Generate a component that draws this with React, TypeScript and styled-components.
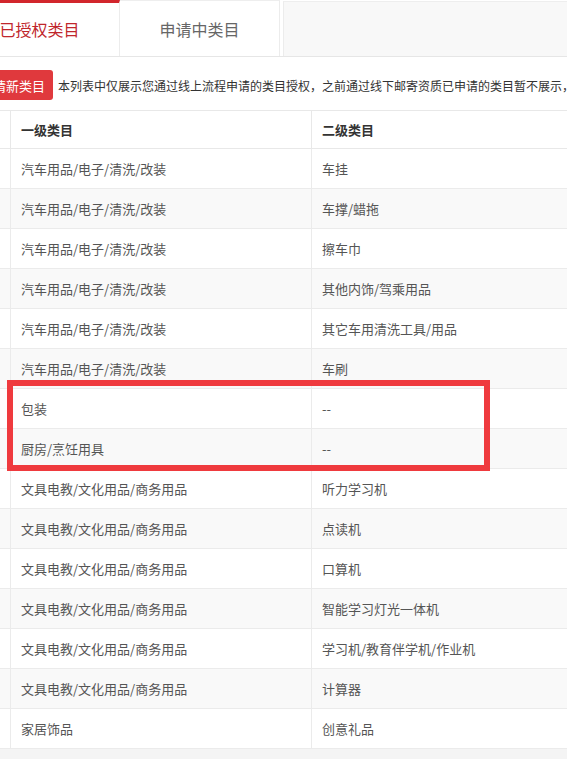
import React from "react";
import styled, { createGlobalStyle } from "styled-components";

const GlobalStyle = createGlobalStyle`
    html, body {
        margin: 0;
        padding: 0;
        background: #f4f4f4;
        overflow: hidden;
    }
    body {
        font-family: "Noto Sans CJK SC", "Liberation Sans", sans-serif;
        color: #333;
    }
`;

type Row = [string, string];

const rows: Row[] = [
    ["汽车用品/电子/清洗/改装", "车挂"],
    ["汽车用品/电子/清洗/改装", "车撑/蜡拖"],
    ["汽车用品/电子/清洗/改装", "擦车巾"],
    ["汽车用品/电子/清洗/改装", "其他内饰/驾乘用品"],
    ["汽车用品/电子/清洗/改装", "其它车用清洗工具/用品"],
    ["汽车用品/电子/清洗/改装", "车刷"],
    ["包装", "--"],
    ["厨房/烹饪用具", "--"],
    ["文具电教/文化用品/商务用品", "听力学习机"],
    ["文具电教/文化用品/商务用品", "点读机"],
    ["文具电教/文化用品/商务用品", "口算机"],
    ["文具电教/文化用品/商务用品", "智能学习灯光一体机"],
    ["文具电教/文化用品/商务用品", "学习机/教育伴学机/作业机"],
    ["文具电教/文化用品/商务用品", "计算器"],
    ["家居饰品", "创意礼品"],
];

const App = () => {
    return (
        <>
            <GlobalStyle />
            <Page>
                <TabBar>
                    <Tab active>已授权类目</Tab>
                    <Tab>申请中类目</Tab>
                    <TabFiller />
                </TabBar>
                <Toolbar>
                    <ApplyBtn>申请新类目</ApplyBtn>
                    <Notice>
                        本列表中仅展示您通过线上流程申请的类目授权，之前通过线下邮寄资质已申请的类目暂不展示，
                    </Notice>
                </Toolbar>
                <TableWrap>
                    <Table>
                        <thead>
                            <tr>
                                <HeadCell />
                                <HeadCell>一级类目</HeadCell>
                                <HeadCell>二级类目</HeadCell>
                            </tr>
                        </thead>
                        <tbody>
                            {rows.map(([first, second], i) => (
                                <BodyRow key={i} striped={i % 2 === 1}>
                                    <Cell />
                                    <Cell>{first}</Cell>
                                    <Cell>{second}</Cell>
                                </BodyRow>
                            ))}
                        </tbody>
                    </Table>
                    <Highlight />
                </TableWrap>
            </Page>
        </>
    );
};

const Page = styled.div`
    margin-left: -40px;
    width: 960px;
    background: #fff;
`;

const TabBar = styled.div`
    display: flex;
    height: 56px;
    border-bottom: 1px solid #e6e6e6;
`;

const Tab = styled.div<{ active?: boolean }>`
    box-sizing: border-box;
    width: 160px;
    height: 56px;
    display: flex;
    align-items: center;
    justify-content: center;
    font-size: 16px;
    background: #fff;
    border-right: 1px solid #ececec;
    border-top: ${(p) => (p.active ? "3px solid #d2262c" : "1px solid #eee")};
    color: ${(p) => (p.active ? "#c0262c" : "#666")};
    padding-bottom: ${(p) => (p.active ? "1px" : "0")};
`;

const TabFiller = styled.div`
    flex: 1;
    margin-left: 3px;
    margin-top: 1px;
    background: #f8f8f8;
    border-top: 1px solid #eee;
    border-left: 1px solid #ececec;
`;

const Toolbar = styled.div`
    display: flex;
    align-items: center;
    gap: 5px;
    margin-top: 13px;
    padding-left: 12px;
    height: 30px;
`;

const ApplyBtn = styled.button`
    height: 30px;
    padding: 0 8px;
    border: none;
    border-radius: 3px;
    background: #e0393d;
    color: #fff;
    font-family: inherit;
    font-size: 13px;
    white-space: nowrap;
`;

const Notice = styled.span`
    font-size: 12px;
    color: #333;
    white-space: nowrap;
`;

const TableWrap = styled.div`
    position: relative;
    margin-top: 10px;
`;

const Table = styled.table`
    width: 100%;
    border-collapse: collapse;
    table-layout: fixed;
    font-size: 13px;
`;

const HeadCell = styled.th`
    height: 37px;
    padding: 0 10px;
    text-align: left;
    font-weight: bold;
    color: #333;
    border-top: 1px solid #e8e8e8;
    border-bottom: 1px solid #e8e8e8;
    border-right: 1px solid #e8e8e8;
    background: #fff;

    &:first-child {
        width: 30px;
    }
    &:nth-child(2) {
        width: 280px;
    }
`;

const BodyRow = styled.tr<{ striped: boolean }>`
    background: ${(p) => (p.striped ? "#f9f9f9" : "#fff")};
`;

const Cell = styled.td`
    height: 39px;
    padding: 0 10px;
    color: #555;
    border-bottom: 1px solid #ebebeb;
    border-right: 1px solid #ebebeb;
    white-space: nowrap;
`;

const Highlight = styled.div`
    position: absolute;
    left: 47px;
    top: 270px;
    width: 483px;
    height: 91px;
    box-sizing: border-box;
    border: 6px solid #ef3a3e;
    pointer-events: none;
`;

export default App;
